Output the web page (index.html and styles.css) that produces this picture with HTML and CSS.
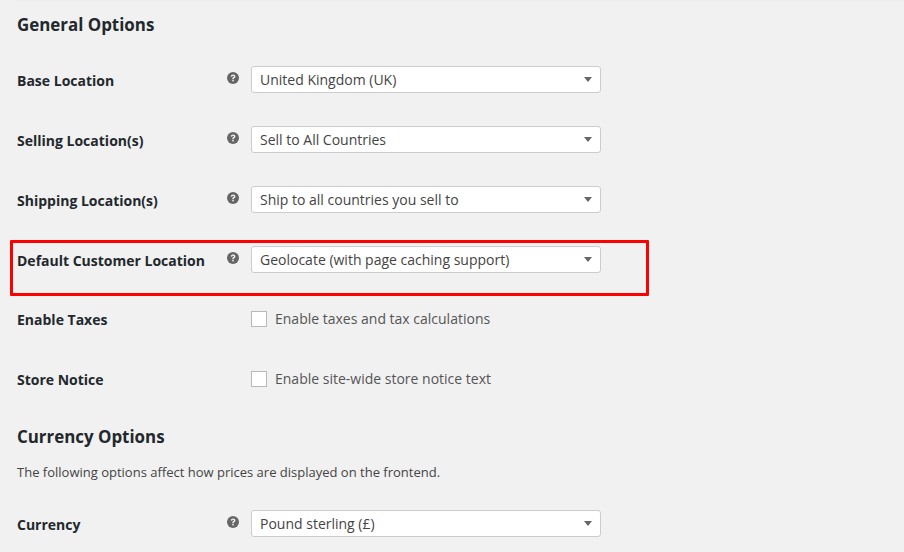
FILE: index.html
```html
<!DOCTYPE html>
<html lang="en">
<head>
<meta charset="utf-8">
<title>General Options</title>
<link rel="stylesheet" href="styles.css">
</head>
<body>
<svg class="sprite" width="0" height="0" aria-hidden="true">
  <symbol id="help" viewBox="0 0 12 12">
    <circle cx="6" cy="6" r="6" fill="#666"/>
    <path d="M3.7 4.6C3.8 3.2 4.8 2.4 6.05 2.4 7.5 2.4 8.4 3.2 8.4 4.4c0 .9-.5 1.3-1.05 1.7-.45.3-.6.5-.6 1.1H5.3c0-.95.3-1.4.9-1.85.45-.33.7-.5.7-.85 0-.42-.35-.68-.85-.68-.55 0-.85.3-.9.85z" fill="#f1f1f1"/>
    <rect x="5.25" y="7.9" width="1.5" height="1.5" fill="#f1f1f1"/>
  </symbol>
</svg>
<main class="page">
  <div class="topline"></div>
  <h2 class="heading first">General Options</h2>
  <div class="row">
    <div class="label">Base Location</div>
    <svg class="help"><use href="#help"/></svg>
    <div class="select">United Kingdom (UK)</div>
  </div>
  <div class="row">
    <div class="label">Selling Location(s)</div>
    <svg class="help"><use href="#help"/></svg>
    <div class="select">Sell to All Countries</div>
  </div>
  <div class="row">
    <div class="label">Shipping Location(s)</div>
    <svg class="help"><use href="#help"/></svg>
    <div class="select">Ship to all countries you sell to</div>
  </div>
  <div class="row">
    <div class="label">Default Customer Location</div>
    <svg class="help"><use href="#help"/></svg>
    <div class="select">Geolocate (with page caching support)</div>
  </div>
  <div class="row">
    <div class="label check-label">Enable Taxes</div>
    <span></span>
    <label class="check"><span class="box"></span>Enable taxes and tax calculations</label>
  </div>
  <div class="row short">
    <div class="label check-label">Store Notice</div>
    <span></span>
    <label class="check"><span class="box"></span>Enable site-wide store notice text</label>
  </div>
  <h2 class="heading second">Currency Options</h2>
  <p class="desc">The following options affect how prices are displayed on the frontend.</p>
  <div class="row">
    <div class="label">Currency</div>
    <svg class="help"><use href="#help"/></svg>
    <div class="select">Pound sterling (£)</div>
  </div>
</main>
<div class="highlight"></div>
</body>
</html>
```
FILE: styles.css
```css
html, body {
  margin: 0;
  padding: 0;
  height: 552px;
  overflow: hidden;
  background: #f1f1f1;
  font-family: "Open Sans", sans-serif;
  color: #23282d;
}
.sprite { position: absolute; }
.page {
  padding: 0 0 0 17px;
}
.topline {
  height: 1px;
  background: #eeeeee;
}
.heading {
  margin: 0;
  font-size: 16.9px;
  font-weight: 700;
  line-height: 24px;
  color: #23282d;
}
.heading.first { padding-top: 12px; padding-bottom: 29px; }
.heading.second { padding-top: 13px; }
.desc {
  margin: 13px 0 28px;
  font-size: 13px;
  line-height: 20px;
  color: #444;
}
.row {
  display: grid;
  grid-template-columns: 210px 24px 350px;
  height: 60px;
  align-items: start;
}
.row.short { height: 46px; }
.label {
  font-size: 14px;
  font-weight: 700;
  line-height: 20px;
  padding-top: 5px;
  color: #23282d;
}
.label.check-label { padding-top: 4px; }
.help {
  width: 12px;
  height: 12px;
  margin: 6px 0 0 0;
}
.select {
  box-sizing: border-box;
  width: 350px;
  height: 27px;
  padding-left: 8px;
  background: #fff;
  border: 1px solid #ccc;
  border-radius: 3px;
  font-size: 14px;
  line-height: 25px;
  color: #444;
  position: relative;
}
.select::after {
  content: "";
  position: absolute;
  right: 8px;
  top: 10px;
  border-top: 5px solid #666;
  border-left: 4px solid transparent;
  border-right: 4px solid transparent;
}
.check {
  display: flex;
  align-items: center;
  gap: 8px;
  font-size: 14px;
  line-height: 20px;
  color: #555;
  padding-top: 3px;
}
.box {
  box-sizing: border-box;
  width: 16px;
  height: 16px;
  background: #fff;
  border: 1px solid #b4b9be;
}
.highlight {
  position: absolute;
  left: 10px;
  top: 240px;
  width: 639px;
  height: 56px;
  box-sizing: border-box;
  border: 3px solid #f00;
  border-radius: 1px;
}
```
